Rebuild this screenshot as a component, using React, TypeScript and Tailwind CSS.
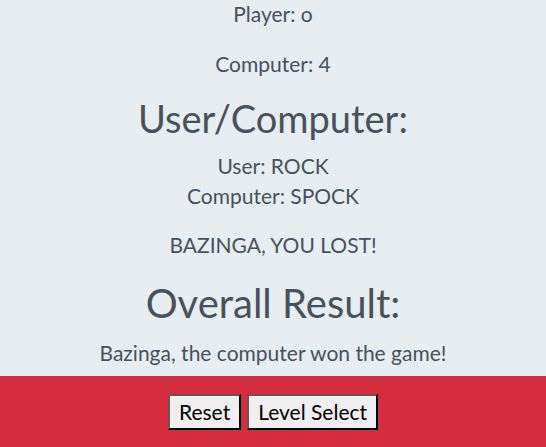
import React from 'react';

const App: React.FC = () => {
  return (
    <div className="min-h-[447px] flex flex-col bg-[#e8edf1] text-[#47525d] text-center font-['Lato','Open_Sans',sans-serif]">
      <div className="flex-1 flex flex-col items-center">
        <p className="text-[21px] leading-[30px] mt-[-1px]">Player: o</p>
        <p className="text-[21px] leading-[30px] mt-[20px]">Computer: 4</p>
        <h2 className="text-[38px] leading-[44px] mt-[17px]">User/Computer:</h2>
        <p className="text-[21px] leading-[30px] mt-[11px]">User: ROCK</p>
        <p className="text-[21px] leading-[30px]">Computer: SPOCK</p>
        <p className="text-[21px] leading-[30px] mt-[19px]">BAZINGA, YOU LOST!</p>
        <h2 className="text-[40px] leading-[44px] mt-[21px]">Overall Result:</h2>
        <p className="text-[21px] leading-[30px] mt-[13px]">Bazinga, the computer won the game!</p>
      </div>
      <div className="h-[71px] bg-[#d62c3f] flex items-center justify-center gap-[6px]">
        <button className="h-[36px] px-[9px] bg-[#efefef] border-2 border-solid border-t-[#5a5a5a] border-l-[#5a5a5a] border-b-black border-r-black text-black text-[21px]">
          Reset
        </button>
        <button className="h-[36px] px-[9px] bg-[#efefef] border-2 border-solid border-t-[#5a5a5a] border-l-[#5a5a5a] border-b-black border-r-black text-black text-[21px]">
          Level Select
        </button>
      </div>
    </div>
  );
};

export default App;
